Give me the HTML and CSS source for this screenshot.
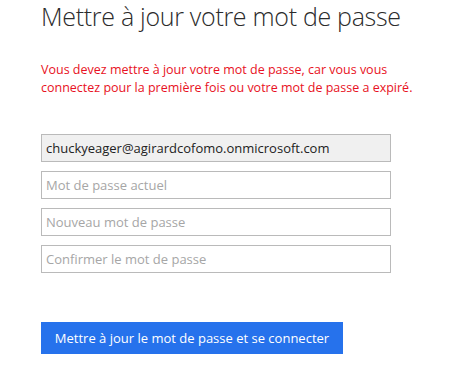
FILE: index.html
```html
<!DOCTYPE html>
<html lang="fr">
<head>
    <meta charset="UTF-8">
    <meta name="viewport" content="width=device-width, initial-scale=1.0">
    <title>Mettre à jour votre mot de passe</title>
    <link rel="stylesheet" href="styles.css">
</head>
<body>
    <div class="container">
        <h1 class="title">Mettre à jour votre mot de passe</h1>
        <p class="error">Vous devez mettre à jour votre mot de passe, car vous vous connectez pour la première fois ou votre mot de passe a expiré.</p>
        <form class="form">
            <input class="field" type="text" value="chuckyeager@agirardcofomo.onmicrosoft.com" disabled>
            <input class="field" type="password" placeholder="Mot de passe actuel">
            <input class="field" type="password" placeholder="Nouveau mot de passe">
            <input class="field" type="password" placeholder="Confirmer le mot de passe">
            <button class="submit" type="button">Mettre à jour le mot de passe et se connecter</button>
        </form>
    </div>
</body>
</html>
```

FILE: styles.css
```css
body {
    margin: 0;
    background: #fff;
    color: #333;
    font-family: 'Open Sans', 'Noto Sans', sans-serif;
}

.container {
    padding: 0 41px;
}

.title {
    margin: 0;
    font-size: 25px;
    font-weight: 300;
    letter-spacing: -0.3px;
    line-height: 33px;
    color: #2b2b2b;
}

.error {
    margin: 28px 0 0;
    width: 385px;
    font-size: 12.5px;
    line-height: 18px;
    color: #e81123;
}

.form {
    display: flex;
    flex-direction: column;
    align-items: flex-start;
    gap: 9px;
    margin-top: 37px;
}

.field {
    box-sizing: border-box;
    width: 350px;
    height: 28px;
    margin: 0;
    padding: 0 4px;
    border: 1px solid #bababa;
    background: #fff;
    font-family: inherit;
    font-size: 13px;
    color: #222;
    outline: none;
}

.field::placeholder {
    color: #a6a6a6;
}

.field:disabled {
    background: #f0f0f0;
    color: #222;
}

.submit {
    box-sizing: border-box;
    width: 302px;
    height: 32px;
    margin-top: 40px;
    padding: 0;
    border: none;
    background: #2672ec;
    color: #fff;
    font-family: inherit;
    font-size: 13px;
    cursor: pointer;
}
```
